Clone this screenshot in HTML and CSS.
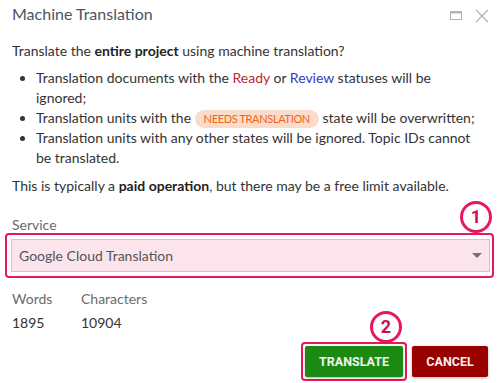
FILE: index.html
```html
<!DOCTYPE html>
<html>
<head>
  <title>Machine Translation</title>
  <link rel="stylesheet" href="styles.css">
</head>
<body>
  <div class="dialog">
    <div class="header">
      <span class="title">Machine Translation</span>
      <span class="window-tools">
        <svg class="tool" width="12" height="9" viewBox="0 0 12 9">
          <rect x="0.5" y="0.5" width="11" height="8" fill="none" stroke="#b3b3b3" stroke-width="1"/>
          <rect x="0.5" y="0.5" width="11" height="2" fill="#b3b3b3"/>
        </svg>
        <svg class="tool" width="14" height="14" viewBox="0 0 14 14">
          <path d="M1 1 L13 13 M13 1 L1 13" stroke="#b3b3b3" stroke-width="1.3" fill="none"/>
        </svg>
      </span>
    </div>

    <p class="intro">Translate the <b>entire project</b> using machine translation?</p>
    <ul class="rules">
      <li>Translation documents with the <span class="ready">Ready</span> or <span class="review">Review</span> statuses will be ignored;</li>
      <li>Translation units with the <span class="pill">NEEDS TRANSLATION</span> state will be overwritten;</li>
      <li>Translation units with any other states will be ignored. Topic IDs cannot be translated.</li>
    </ul>
    <p class="note">This is typically a <b>paid operation</b>, but there may be a free limit available.</p>

    <div class="field">
      <div class="field-label">Service</div>
      <div class="marked marked-select">
        <div class="select">
          <span>Google Cloud Translation</span>
          <svg width="10" height="5" viewBox="0 0 10 5"><path d="M0 0 L10 0 L5 5 Z" fill="#7d6b74"/></svg>
        </div>
      </div>
      <span class="step step-1">1</span>
    </div>

    <div class="stats">
      <div class="stat">
        <div class="field-label">Words</div>
        <div class="value">1895</div>
      </div>
      <div class="stat">
        <div class="field-label">Characters</div>
        <div class="value">10904</div>
      </div>
    </div>

    <div class="actions">
      <span class="marked marked-btn">
        <button class="btn btn-ok">TRANSLATE</button>
        <span class="step step-2">2</span>
      </span>
      <button class="btn btn-cancel">CANCEL</button>
    </div>
  </div>
</body>
</html>
```

FILE: styles.css
```css
body {
  margin: 0;
  background: #fff;
  font-family: Lato, "Noto Sans", sans-serif;
  font-size: 14px;
  color: #333;
}

.dialog {
  width: 499px;
  height: 383px;
  padding: 0 11px 0 12px;
  box-sizing: border-box;
  overflow: hidden;
}

.header {
  display: flex;
  justify-content: space-between;
  align-items: center;
  height: 26px;
}

.title {
  font-size: 16px;
  color: #4a5566;
}

.window-tools {
  display: flex;
  align-items: center;
  gap: 13px;
  margin-top: 5px;
  margin-right: -1px;
}

.tool {
  display: block;
}

.intro {
  margin: 15px 0 0;
  line-height: 20px;
}

.intro b, .note b {
  font-weight: 700;
  color: #222;
}

.rules {
  margin: 7px 8px 0 0;
  padding-left: 24px;
  line-height: 20px;
}

.ready {
  color: #c0262d;
}

.review {
  color: #2a3ec0;
}

.pill {
  display: inline-block;
  background: #fbdcca;
  color: #f0621a;
  font-size: 11px;
  letter-spacing: -0.35px;
  line-height: 18px;
  padding: 0 9px;
  border-radius: 9px;
}

.note {
  margin: 8px 0 0;
  line-height: 20px;
}

.field {
  position: relative;
  margin-top: 20px;
}

.field-label {
  color: #6b6b6b;
  line-height: 18px;
}

.marked {
  display: block;
  border: 2px solid #e8175d;
  border-radius: 4px;
}

.marked-select {
  margin: -1px -6px 0 -7px;
  padding: 4px 2px 4px 4px;
}

.select {
  display: flex;
  justify-content: space-between;
  align-items: center;
  height: 31px;
  padding: 0 7px 0 7px;
  background: #fce4ec;
  border: 1px solid #e3bccb;
  color: #555;
  font-size: 14px;
}

.step {
  position: absolute;
  box-sizing: border-box;
  width: 32px;
  height: 32px;
  border: 3px solid #e8175d;
  border-radius: 50%;
  background: #fff;
  color: #c8104e;
  font-family: Roboto, sans-serif;
  font-weight: 700;
  font-size: 18px;
  line-height: 26px;
  text-align: center;
}

.step-1 {
  right: -4px;
  top: -15px;
}

.stats {
  display: grid;
  grid-template-columns: 69px auto;
  margin-top: 11px;
}

.stats .field-label {
  line-height: 20px;
}

.stat .value {
  margin-top: 4px;
  line-height: 20px;
  color: #333;
}

.actions {
  display: flex;
  justify-content: flex-end;
  align-items: center;
  gap: 5px;
  margin-top: 9px;
}

.marked-btn {
  position: relative;
  padding: 2px;
}

.step-2 {
  left: 67px;
  top: -33px;
}

.btn {
  display: block;
  border: none;
  border-radius: 2px;
  height: 31px;
  padding: 0;
  color: #f2f2f2;
  font-family: Roboto, sans-serif;
  font-weight: 700;
  font-size: 12.5px;
  box-shadow: 0 1px 3px rgba(0, 0, 0, 0.3);
}

.btn-ok {
  width: 98px;
  background: #1b8a10;
}

.btn-cancel {
  width: 76px;
  background: #990000;
}
```
